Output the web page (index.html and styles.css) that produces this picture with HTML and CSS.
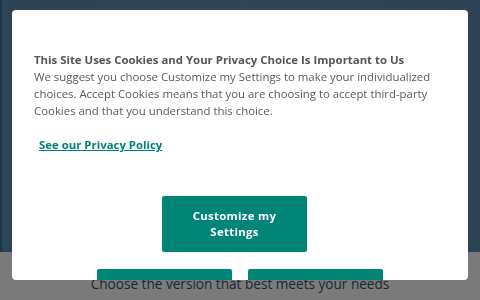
FILE: index.html
```html
<html lang="en">
<head>
    <meta charset="UTF-8">
    <meta name="viewport" content="width=device-width, initial-scale=1.0">
    <title>Cookie Settings</title>
    <link rel="stylesheet" href="styles.css">
</head>
<body>
    <div class="hero"></div>
    <div class="versions">
        <h2>Choose the version that best meets your needs</h2>
    </div>

    <div class="modal">
        <div class="modal-body">
            <h3 class="modal-title">This Site Uses Cookies and Your Privacy Choice Is Important to Us</h3>
            <p class="modal-text">We suggest you choose Customize my Settings to make your individualized choices. Accept Cookies means that you are choosing to accept third-party Cookies and that you understand this choice.</p>
            <a href="#" class="policy-link">See our Privacy Policy</a>
            <div class="actions">
                <button type="button" class="btn btn-main">Customize my Settings</button>
                <div class="actions-row">
                    <!-- labels sit below the fold of the dialog -->
                    <button type="button" class="btn" aria-label="Reject Cookies"></button>
                    <button type="button" class="btn" aria-label="Accept Cookies"></button>
                </div>
            </div>
        </div>
    </div>
</body>
</html>
```

FILE: styles.css
```css
body {
    margin: 0;
    font-family: "Open Sans", Arial, sans-serif;
    background-color: #7b7b7b;
    height: 300px;
    overflow: hidden;
}
.hero {
    height: 252px;
    background: linear-gradient(90deg, #1c2e3c 0, #2c4454 3px, #2f4758 50%, #2c4454 100%);
}
.versions {
    padding-top: 23px;
    text-align: center;
}
.versions h2 {
    margin: 0;
    font-size: 13.6px;
    line-height: 18px;
    font-weight: 400;
    color: #1c2833;
}
.modal {
    position: fixed;
    top: 10px;
    left: 12px;
    width: 456px;
    height: 270px;
    background-color: white;
    border-radius: 4px;
    overflow: hidden;
}
.modal-body {
    padding: 41px 30px 0 22px;
}
.modal-title {
    margin: 0;
    font-size: 11.4px;
    line-height: 17px;
    font-weight: 700;
    color: #555;
}
.modal-text {
    margin: 0;
    font-size: 11.4px;
    line-height: 17px;
    color: #5a5a5a;
}
.policy-link {
    display: inline-block;
    margin: 17px 0 0 5px;
    font-size: 11.4px;
    line-height: 17px;
    font-weight: 700;
    color: #00807a;
}
.actions {
    display: flex;
    flex-direction: column;
    align-items: center;
    gap: 17px;
    margin-top: 43px;
}
.actions-row {
    display: flex;
    gap: 16px;
    margin-left: 8px;
}
.btn {
    width: 135px;
    height: 56px;
    background-color: #008577;
    color: white;
    border: none;
    border-radius: 2px;
    font-family: "Open Sans", Arial, sans-serif;
    font-size: 11.4px;
    line-height: 16px;
    font-weight: 700;
    letter-spacing: 0.3px;
    padding: 0 20px;
}
.btn-main {
    width: 145px;
    margin-right: 3px;
}
```
